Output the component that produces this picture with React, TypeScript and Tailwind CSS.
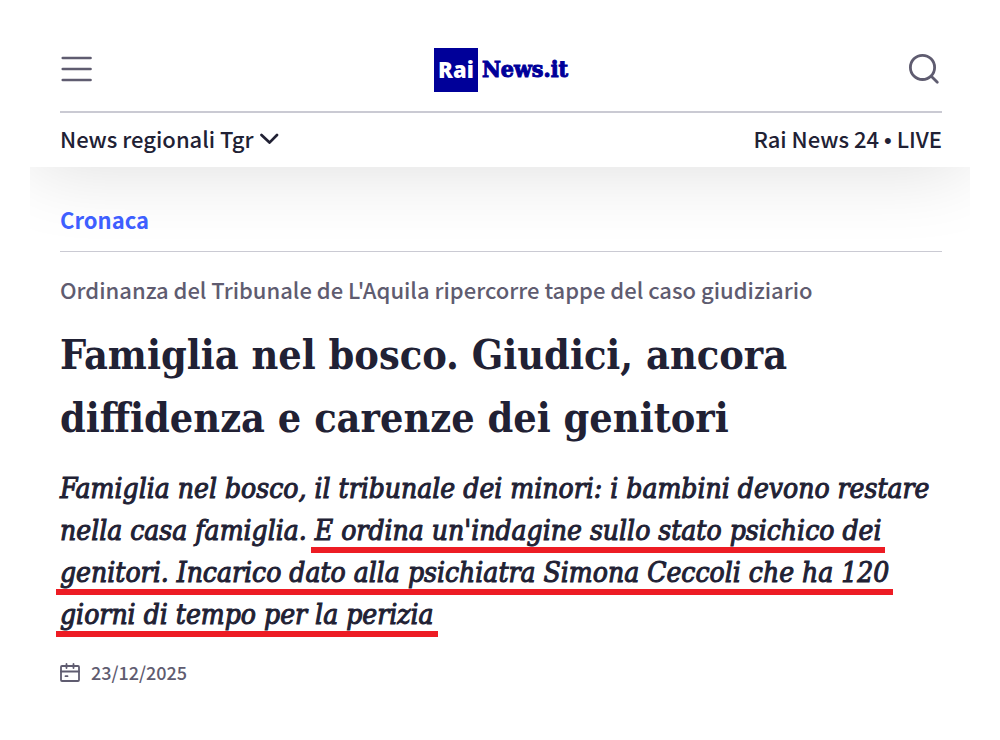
import * as React from "react";

interface SummaryLine {
  text?: string;
  marked?: string;
}

const TITLE_LINES = [
  "Famiglia nel bosco. Giudici, ancora",
  "diffidenza e carenze dei genitori",
];

const SUMMARY_LINES: SummaryLine[] = [
  { text: "Famiglia nel bosco, il tribunale dei minori: i bambini devono restare" },
  { text: "nella casa famiglia. ", marked: "E ordina un'indagine sullo stato psichico dei" },
  { marked: "genitori. Incarico dato alla psichiatra Simona Ceccoli che ha 120" },
  { marked: "giorni di tempo per la perizia" },
];

function MenuIcon() {
  return (
    <svg width="32" height="32" viewBox="0 0 32 32" fill="none" stroke="currentColor" strokeWidth="2.7" strokeLinecap="round" aria-hidden>
      <path d="M2.8 4H30.5M2.8 15H30.5M2.8 26H30.5" />
    </svg>
  );
}

function SearchIcon() {
  return (
    <svg width="34" height="34" viewBox="0 0 34 34" fill="none" stroke="currentColor" strokeWidth="2.8" strokeLinecap="round" aria-hidden>
      <circle cx="14.5" cy="14.4" r="12.1" />
      <path d="M23.5 23.5L29.3 29.3" />
    </svg>
  );
}

function ChevronIcon() {
  return (
    <svg width="20" height="12" viewBox="0 0 20 12" fill="none" stroke="currentColor" strokeWidth="2.7" strokeLinecap="round" strokeLinejoin="round" aria-hidden>
      <path d="M1.5 3L9.5 10.6L17 3" />
    </svg>
  );
}

function CalendarIcon() {
  return (
    <svg width="20" height="20" viewBox="0 0 20 20" fill="none" stroke="currentColor" strokeWidth="1.8" strokeLinecap="round" aria-hidden>
      <rect x="1" y="4" width="18" height="15" rx="1" />
      <path d="M1 9.5H19M6.5 2V6M13.5 2V6M5.5 14.2H7.5" />
    </svg>
  );
}

function Logo() {
  return (
    <a href="#" className="flex items-center gap-1 text-[#000099]">
      <span className="flex size-11 items-center justify-center bg-[#000099] font-['Open_Sans',sans-serif] text-[22px] font-extrabold text-white">
        Rai
      </span>
      <span className="font-['DejaVu_Serif_Condensed','DejaVu_Serif',serif] text-[23px] font-bold [-webkit-text-stroke:1px]">
        News.it
      </span>
    </a>
  );
}

function Header() {
  return (
    <header className="relative bg-white pr-7 pl-[30px] shadow-[0_0_80px_rgba(0,0,0,0.14)]">
      <div className="grid h-[113px] grid-cols-3 items-center border-b-2 border-[#cacad3] pt-7 text-[#5f5c70]">
        <button type="button" aria-label="Menu" className="justify-self-start">
          <MenuIcon />
        </button>
        <div className="justify-self-center">
          <Logo />
        </div>
        <button type="button" aria-label="Cerca" className="justify-self-end">
          <SearchIcon />
        </button>
      </div>
      <nav className="flex h-[54px] items-center justify-between pb-1 text-[22px] font-medium">
        <button type="button" className="flex items-center gap-1.5">
          News regionali Tgr
          <ChevronIcon />
        </button>
        <a href="#">
          Rai News 24 <span className="font-['Liberation_Sans',sans-serif] leading-none">•</span> LIVE
        </a>
      </nav>
    </header>
  );
}

function Summary({ lines }: { lines: SummaryLine[] }) {
  return (
    <p className="mt-[18px] font-['DejaVu_Serif_Condensed','DejaVu_Serif',serif] text-[28px] leading-[42px] whitespace-nowrap italic [-webkit-text-stroke:1px]">
      {lines.map(({ text, marked }, index) => (
        <span key={`line-${index}`} className="block whitespace-pre">
          {text}
          {marked ? (
            <span className="relative inline-block after:absolute after:-inset-x-1 after:-bottom-px after:h-[6px] after:bg-[#ed1c24]">
              {marked}
            </span>
          ) : null}
        </span>
      ))}
    </p>
  );
}

export default function App() {
  return (
    <div className="mx-[30px] overflow-hidden bg-white pb-12 font-['Noto_Sans_CJK_SC',sans-serif] text-[#212134]">
      <Header />
      <main className="relative pr-7 pl-[30px]">
        <div className="flex h-[85px] items-center border-b border-[#cacad3] pt-5 text-[22px] font-bold text-[#3e5fff]">
          <a href="#">Cronaca</a>
        </div>
        <p className="mt-[21px] text-[22px] leading-8 font-medium text-[#5f5c70]">
          Ordinanza del Tribunale de L'Aquila ripercorre tappe del caso giudiziario
        </p>
        <h1 className="mt-[19px] font-['DejaVu_Serif_Condensed','DejaVu_Serif',serif] text-[41px] leading-[63px] font-bold whitespace-nowrap">
          {TITLE_LINES.map((line) => (
            <span key={line} className="block">
              {line}
            </span>
          ))}
        </h1>
        <Summary lines={SUMMARY_LINES} />
        <div className="mt-5 flex items-center gap-[11px] text-lg leading-8 font-medium text-[#5f5c70]">
          <CalendarIcon />
          <time dateTime="2025-12-23">23/12/2025</time>
        </div>
      </main>
    </div>
  );
}
